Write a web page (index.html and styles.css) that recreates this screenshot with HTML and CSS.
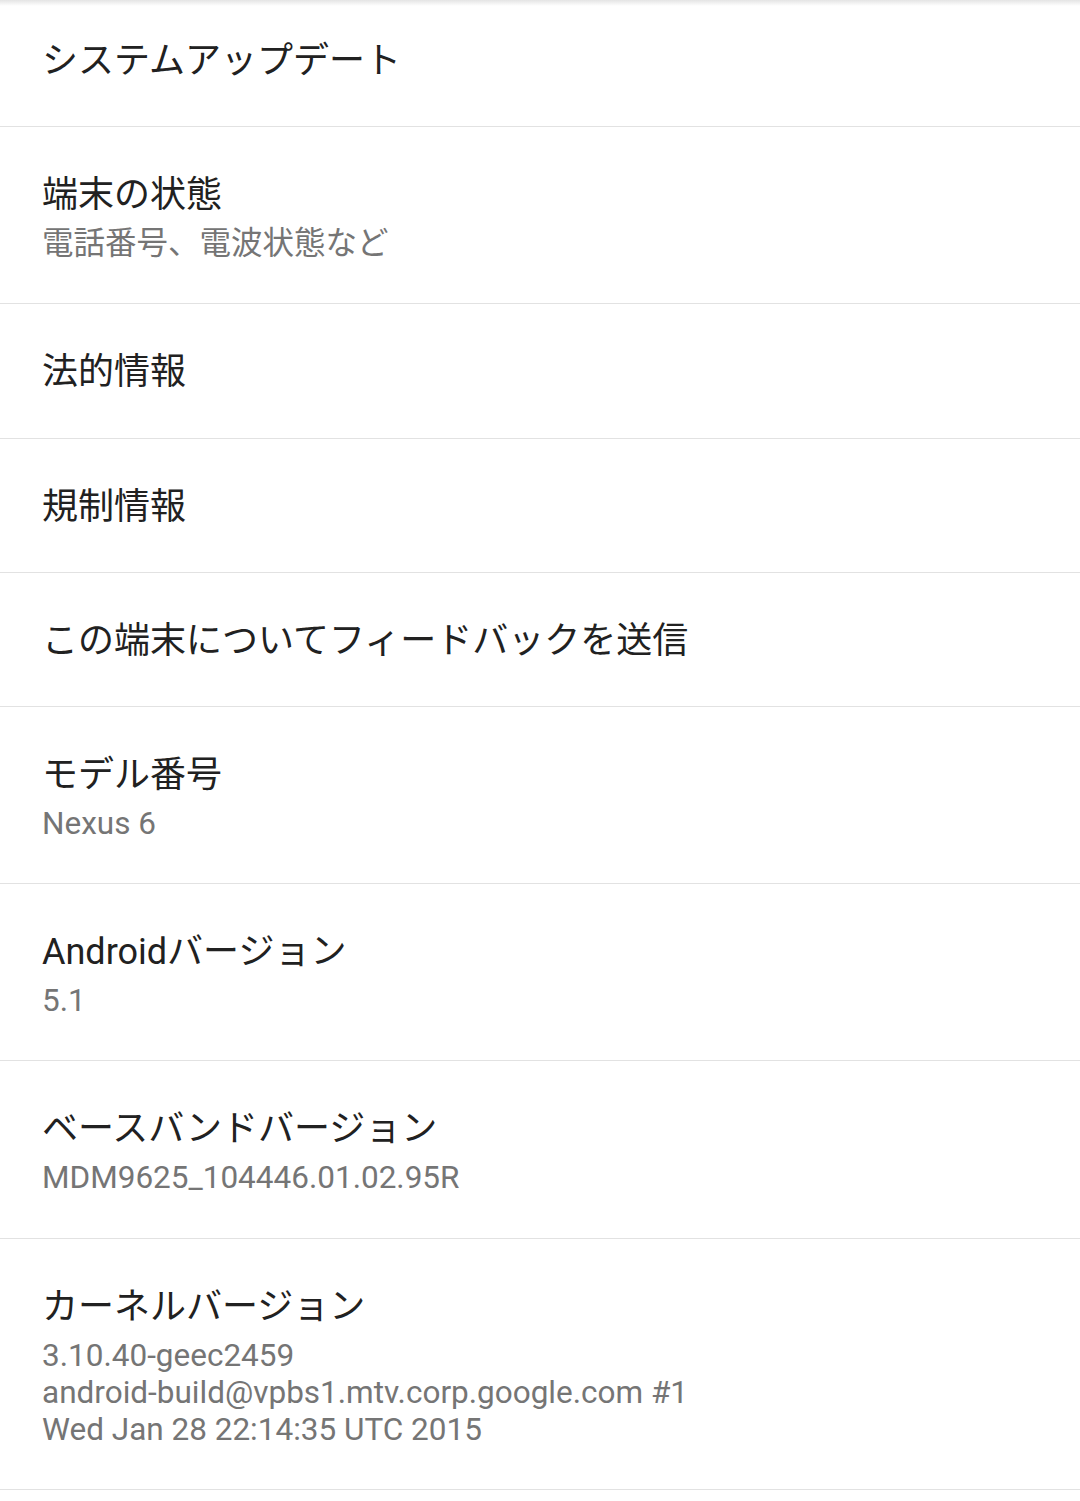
FILE: index.html
```html
<!DOCTYPE html>
<html lang="ja">
<head>
    <meta charset="UTF-8">
    <meta name="viewport" content="width=device-width, initial-scale=1.0">
    <title>端末情報</title>
    <link rel="stylesheet" href="styles.css">
</head>
<body>
    <div class="toolbar-shadow"></div>

    <div class="pref-list">
        <div class="pref first">
            <div class="pref-title">システムアップデート</div>
        </div>

        <div class="pref">
            <div class="pref-title">端末の状態</div>
            <div class="pref-summary">電話番号、電波状態など</div>
        </div>

        <div class="pref">
            <div class="pref-title">法的情報</div>
        </div>

        <div class="pref">
            <div class="pref-title">規制情報</div>
        </div>

        <div class="pref">
            <div class="pref-title">この端末についてフィードバックを送信</div>
        </div>

        <div class="pref">
            <div class="pref-title">モデル番号</div>
            <div class="pref-summary">Nexus 6</div>
        </div>

        <div class="pref">
            <div class="pref-title">Androidバージョン</div>
            <div class="pref-summary">5.1</div>
        </div>

        <div class="pref">
            <div class="pref-title">ベースバンドバージョン</div>
            <div class="pref-summary">MDM9625_104446.01.02.95R</div>
        </div>

        <div class="pref">
            <div class="pref-title">カーネルバージョン</div>
            <div class="pref-summary kernel">
                3.10.40-geec2459<br>
                android-build@vpbs1.mtv.corp.google.com #1<br>
                Wed Jan 28 22:14:35 UTC 2015
            </div>
        </div>
    </div>
</body>
</html>
```

FILE: styles.css
```css
body {
    margin: 0;
    background: #fff;
    font-family: Roboto, "Noto Sans CJK JP", sans-serif;
    position: relative;
}

.toolbar-shadow {
    position: absolute;
    top: 0;
    left: 0;
    right: 0;
    height: 6px;
    background: linear-gradient(to bottom, #e4e4e4 0%, rgba(255, 255, 255, 0) 100%);
}

.pref {
    padding: 45px 42px 41.2px;
    border-bottom: 1px solid #e2e2e2;
}

.pref.first {
    padding-top: 38px;
}

.pref-title {
    font-size: 36px;
    line-height: 47px;
    color: #212121;
}

.pref-summary {
    margin-top: 6px;
    font-size: 31.5px;
    line-height: 37px;
    color: #757575;
}

.pref-summary.kernel {
    font-size: 31.5px;
}
```
